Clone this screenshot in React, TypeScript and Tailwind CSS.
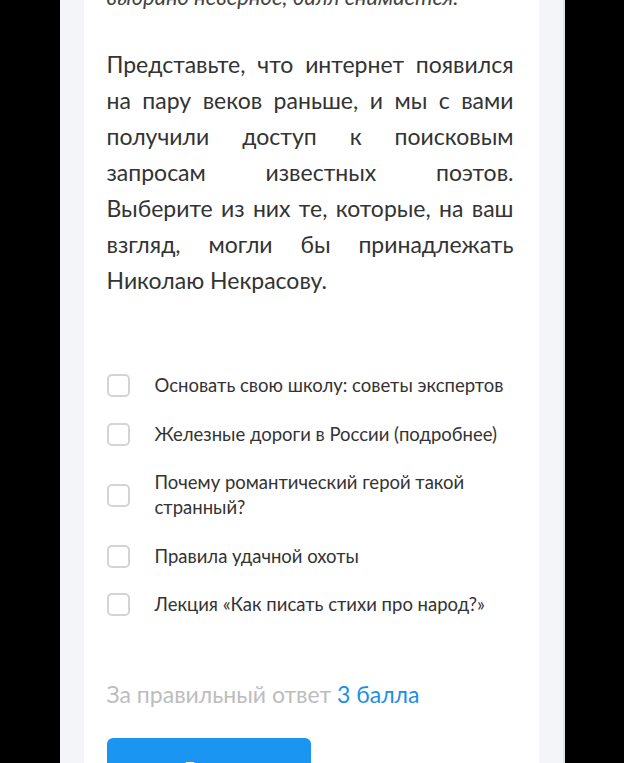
import React from "react";

const options = [
  "Основать свою школу: советы экспертов",
  "Железные дороги в России (подробнее)",
  "Почему романтический герой такой странный?",
  "Правила удачной охоты",
  "Лекция «Как писать стихи про народ?»",
];

const App: React.FC = () => {
  return (
    <div className="flex h-[763px] justify-center overflow-hidden bg-black font-['Lato',sans-serif]">
      <div className="w-[505px] border-r-2 border-[#dfe1e6] bg-[#f4f5f8] px-[24px]">
        <div className="min-h-[900px] bg-white pl-[23px] pr-[25px]">
          <p className="-mt-[14px] text-[22px] italic leading-[22px] text-[#444]">
            выбрано неверное, балл снимается.
          </p>

          <p className="mt-[38px] text-justify text-[23px] leading-[36px] text-[#333]">
            Представьте, что интернет появился на пару веков раньше, и мы с
            вами получили доступ к поисковым запросам известных поэтов.
            Выберите из них те, которые, на ваш взгляд, могли бы принадлежать
            Николаю Некрасову.
          </p>

          <ul className="mt-[75px] flex flex-col gap-[23.5px]">
            {options.map((o) => (
              <li key={o} className="flex items-center gap-[25px]">
                <span className="h-[23px] w-[23px] shrink-0 rounded-[5px] border-2 border-[#d4d4d4]" />
                <span className="text-[18.5px] leading-[25px] text-[#333]">
                  {o}
                </span>
              </li>
            ))}
          </ul>

          <p className="mt-[63px] text-[23px] leading-[28px] text-[#bdbdbd]">
            За правильный ответ <span className="text-[#1b8fe6]">3 балла</span>
          </p>

          <button className="mt-[30px] h-[60px] w-[204px] rounded-[6px] bg-[#1b95f2] text-[18px] font-semibold text-white">
            Далее
          </button>
        </div>
      </div>
    </div>
  );
};

export default App;
